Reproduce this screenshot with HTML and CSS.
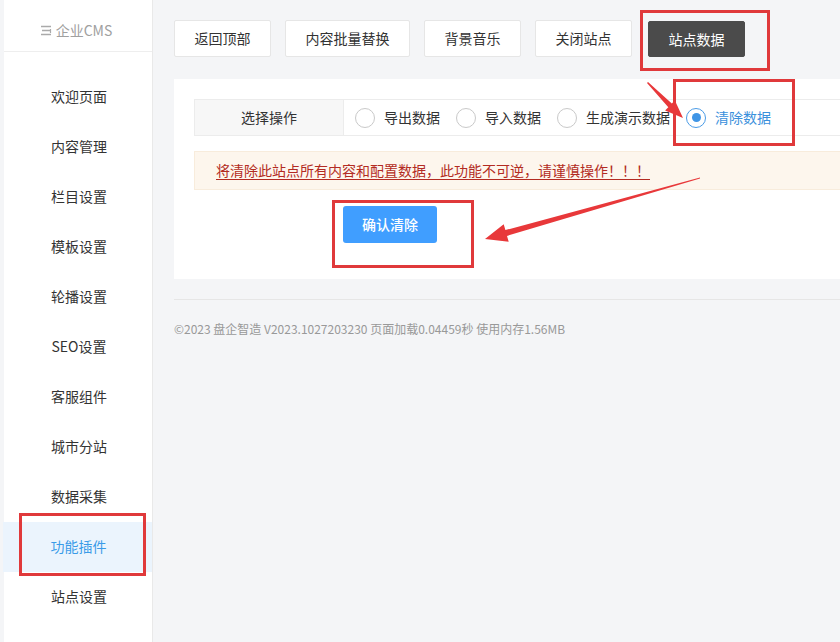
FILE: index.html
```html
<!DOCTYPE html>
<html lang="zh-CN">
<head>
<meta charset="utf-8">
<title>企业CMS - 功能插件</title>
<link rel="stylesheet" href="styles.css">
</head>
<body>
<div class="app">
  <aside class="sidebar">
    <div class="brand">
      <svg class="brand-icon" width="12" height="11" viewBox="0 0 12 11"><path d="M1 1.5h10M2 5.5h8M1 9.5h10" stroke="#aaa" stroke-width="1.3" fill="none"/><path d="M10.5 4v4" stroke="#aaa" stroke-width="1.2"/></svg>
      <span>企业CMS</span>
    </div>
    <nav class="nav">
      <a class="nav-item">欢迎页面</a>
      <a class="nav-item">内容管理</a>
      <a class="nav-item">栏目设置</a>
      <a class="nav-item">模板设置</a>
      <a class="nav-item">轮播设置</a>
      <a class="nav-item">SEO设置</a>
      <a class="nav-item">客服组件</a>
      <a class="nav-item">城市分站</a>
      <a class="nav-item">数据采集</a>
      <a class="nav-item active">功能插件</a>
      <a class="nav-item">站点设置</a>
    </nav>
  </aside>

  <main class="main">
    <div class="toolbar">
      <button class="tab">返回顶部</button>
      <button class="tab">内容批量替换</button>
      <button class="tab">背景音乐</button>
      <button class="tab">关闭站点</button>
      <button class="tab tab-dark">站点数据</button>
    </div>

    <section class="panel">
      <div class="form-row">
        <div class="form-label">选择操作</div>
        <div class="form-field">
          <label class="radio"><span class="radio-dot"></span>导出数据</label>
          <label class="radio"><span class="radio-dot"></span>导入数据</label>
          <label class="radio"><span class="radio-dot"></span>生成演示数据</label>
          <label class="radio checked"><span class="radio-dot"></span>清除数据</label>
        </div>
      </div>
      <div class="alert"><span>将清除此站点所有内容和配置数据，此功能不可逆，请谨慎操作！！！</span></div>
      <div class="actions">
        <button class="btn-primary">确认清除</button>
      </div>
    </section>

    <footer class="footer">©2023 盘企智造 V2023.1027203230 页面加载0.04459秒 使用内存1.56MB</footer>
  </main>
</div>

<!-- annotation layer: highlight frames and arrows -->
<div class="mark mark-tab"></div>
<div class="mark mark-radio"></div>
<div class="mark mark-confirm"></div>
<div class="mark mark-nav"></div>
<svg class="arrows" width="840" height="642" viewBox="0 0 840 642">
  <polygon fill="#e8383a" points="647,83 668.3,107.2 665.1,110.4 683,118 674.9,100.4 671.8,103.6 648,82"/>
  <polygon fill="#e8383a" points="700,177.5 505.4,230.1 503.7,224.3 485,239 508.7,241.7 507,235.9 700,178.5"/>
</svg>
</body>
</html>
```

FILE: styles.css
```css
* { box-sizing: border-box; }

html, body {
  margin: 0;
  padding: 0;
}

body {
  width: 840px;
  height: 642px;
  overflow: hidden;
  position: relative;
  background: #f4f5f7;
  font-family: "Noto Sans CJK SC", "Noto Sans", sans-serif;
  font-size: 14px;
  line-height: 1.4;
  color: #333;
}

.app {
  display: flex;
  height: 642px;
}

/* ---------- sidebar ---------- */
.sidebar {
  width: 149px;
  margin-left: 4px;
  flex: none;
  background: #fff;
  border-right: 1px solid #e9e9e9;
}

.brand {
  height: 52px;
  border-bottom: 1px solid #eeeeee;
  display: flex;
  align-items: center;
  justify-content: center;
  gap: 4px;
  color: #a0a0a0;
  font-size: 14px;
  padding-top: 10px;
  padding-right: 4px;
}

.nav {
  display: flex;
  flex-direction: column;
  padding-top: 20px;
}

.nav-item {
  height: 50px;
  display: flex;
  align-items: center;
  justify-content: center;
  padding-left: 2px;
  color: #333;
  font-size: 14px;
}

.nav-item.active {
  background: #ebf4fd;
  color: #3a9be8;
  margin-left: -1px;
}

/* ---------- main ---------- */
.main {
  flex: 1;
  min-width: 0;
  padding: 20px 0 0 21px;
  overflow: hidden;
}

.toolbar {
  display: flex;
  align-items: center;
  gap: 14px;
  height: 37px;
}

.tab {
  height: 37px;
  padding: 1px 19.5px 0;
  background: #fff;
  border: 1px solid #e6e6e6;
  border-radius: 2px;
  font: inherit;
  font-size: 14px;
  color: #333;
  white-space: nowrap;
}

.tab-dark {
  margin-left: 2px;
  height: 36px;
  margin-top: 1px;
  padding: 1px 19.5px 0;
  background: #4b4b4b;
  border-color: #4b4b4b;
  color: #fff;
}

.panel {
  margin-top: 22px;
  width: 700px;
  background: #fff;
  padding: 20px 0 36px 20px;
}

.form-row {
  display: flex;
  height: 37px;
  border: 1px solid #ececec;
  border-right: none;
}

.form-label {
  width: 149px;
  flex: none;
  background: #f7f7f7;
  border-right: 1px solid #ececec;
  display: flex;
  align-items: center;
  justify-content: center;
  color: #333;
}

.form-field {
  display: flex;
  align-items: center;
  padding-left: 11px;
  gap: 16px;
}

.radio {
  display: flex;
  align-items: center;
  gap: 9px;
  color: #333;
}

.radio-dot {
  width: 20px;
  height: 20px;
  border: 1.5px solid #c9c9c9;
  border-radius: 50%;
  display: flex;
  align-items: center;
  justify-content: center;
}

.radio.checked { color: #3a90dc; }

.radio.checked .radio-dot { border-color: #4a9be6; }

.radio.checked .radio-dot::after {
  content: "";
  width: 9px;
  height: 9px;
  border-radius: 50%;
  background: #3f95e6;
}

.alert {
  margin-top: 15px;
  height: 39px;
  background: #fdf6ed;
  border: 1px solid #f8ecdc;
  border-right: none;
  display: flex;
  align-items: center;
  padding-left: 21px;
}

.alert span {
  color: #b32b22;
  text-decoration: underline;
  text-underline-offset: 3px;
}

.actions {
  margin-top: 16px;
  padding-left: 149px;
}

.btn-primary {
  width: 94px;
  height: 37px;
  border: none;
  border-radius: 3px;
  background: #409eff;
  color: #fff;
  font: inherit;
  font-size: 14px;
  font-weight: 500;
}

.footer {
  margin-top: 20px;
  border-top: 1px solid #e6e6e6;
  padding-top: 21px;
  color: #999;
  font-size: 12px;
}

/* ---------- annotations ---------- */
.mark {
  position: absolute;
  border: 3px solid #e0393b;
}

.mark-tab { left: 640px; top: 10px; width: 130px; height: 61px; }
.mark-radio { left: 673px; top: 79px; width: 122px; height: 67px; }
.mark-confirm { left: 332px; top: 200px; width: 142px; height: 68px; }
.mark-nav { left: 19px; top: 513px; width: 127px; height: 63px; }

.arrows {
  position: absolute;
  left: 0;
  top: 0;
  pointer-events: none;
}
```
